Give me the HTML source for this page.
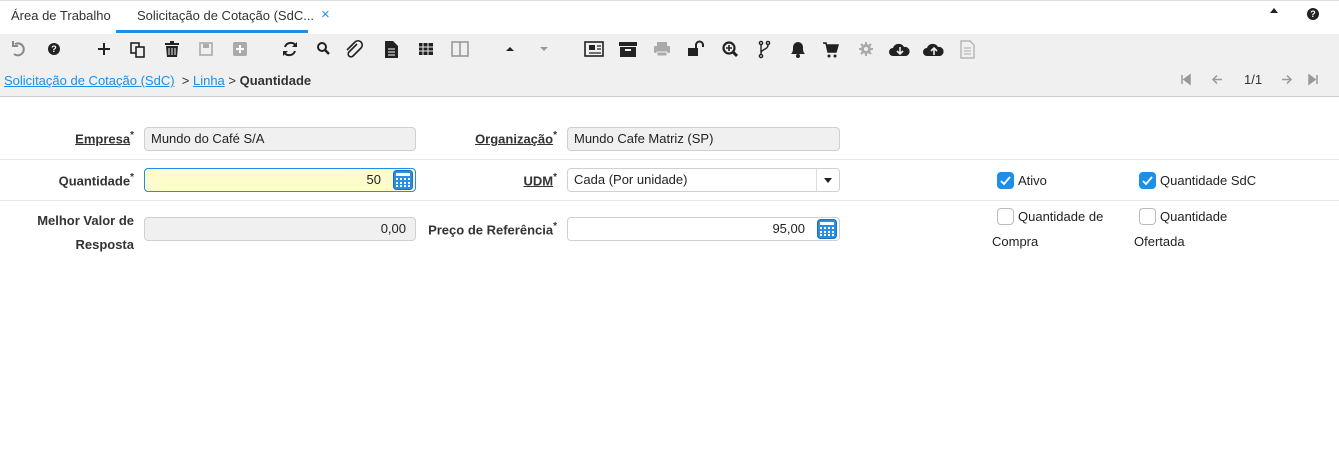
<!DOCTYPE html>
<html><head><meta charset="utf-8"><style>
*{box-sizing:border-box;margin:0;padding:0}
body{width:1339px;height:464px;background:#fff;font-family:"Liberation Sans",sans-serif;font-size:13px;color:#333;position:relative;overflow:hidden}
.abs{position:absolute}
.tabbar{left:0;top:0;width:1339px;height:34px;background:#fff;border-top:1px solid #ddd}
.toolbar{left:0;top:34px;width:1339px;height:63px;background:#f0f0f0;border-bottom:1px solid #ccc}
.lbl{position:absolute;font-weight:bold;font-size:13px;text-align:right;color:#333}
.lbl sup{font-size:10px}
.inp{position:absolute;height:24px;border:1px solid #d0d0d0;border-radius:4px;background:#f0f0f0;font-size:13px;padding:0 6px;line-height:22px;color:#222}
.sep{position:absolute;left:0;width:1339px;height:1px;background:#e8e8e8}
.cb{position:absolute;width:17px;height:17px;border-radius:4px;border:1px solid #bbb;background:#fff}
.cb.on{background:#1e8fe8;border-color:#1e8fe8}
.ct{position:absolute;font-size:13px;color:#222}
</style></head><body>
<div class="abs tabbar"></div>
<div class="abs" style="left:11px;top:8px;font-size:13px;color:#333">Área de Trabalho</div>
<div class="abs" style="left:137px;top:8px;font-size:13px;color:#333">Solicitação de Cotação (SdC...</div>
<div class="abs" style="left:321px;top:6px;font-size:15px;color:#1e8fe8">×</div>
<div class="abs" style="left:116px;top:30px;width:192px;height:3px;background:#1e8fe8"></div>
<div class="abs" style="left:1270px;top:8px;width:0;height:0;border-left:4px solid transparent;border-right:4px solid transparent;border-bottom:5px solid #222"></div>
<div class="abs" style="left:1307px;top:8px;width:12px;height:12px;border-radius:50%;background:#222;color:#fff;font-size:9px;font-weight:bold;text-align:center;line-height:12px">?</div>
<div class="abs toolbar"></div>

<svg class="abs" style="left:0;top:34px" width="990" height="32" viewBox="0 34 990 32">
<g fill="none" stroke="#888" stroke-width="2"><path d="M15 44 A6 6 0 1 1 14 54"/><path d="M13 41v5h5" /></g>
<circle cx="54" cy="49" r="6" fill="#222"/><text x="54" y="52" font-size="9" font-weight="bold" fill="#fff" text-anchor="middle" font-family="Liberation Sans">?</text>
<path d="M104 43v12M98 49h12" stroke="#222" stroke-width="2"/>
<g fill="none" stroke="#222" stroke-width="1.6"><rect x="131" y="43" width="8" height="10"/><rect x="136" y="47" width="8" height="10" fill="#f0f0f0"/></g>
<g fill="#222"><rect x="165" y="43" width="14" height="2"/><rect x="170" y="41" width="4" height="2"/><path d="M166 46h12l-1 11h-10z"/></g>
<path d="M169 48v7M172 48v7M175 48v7" stroke="#f0f0f0" stroke-width="1"/>
<rect x="200" y="43" width="12" height="12" fill="none" stroke="#aaa" stroke-width="1.6"/><rect x="203" y="44" width="6" height="4" fill="#aaa"/>
<rect x="233" y="42" width="14" height="14" rx="2" fill="#aaa"/><path d="M240 45v8M236 49h8" stroke="#fff" stroke-width="2"/>
<g fill="none" stroke="#222" stroke-width="2"><path d="M296 46a6 6 0 0 0-11 1"/><path d="M284 52a6 6 0 0 0 11-1"/></g><path d="M297 42v5h-5z M283 56v-5h5z" fill="#222"/>
<circle cx="322" cy="47" r="4" fill="none" stroke="#222" stroke-width="2"/><path d="M325 50l4 4" stroke="#222" stroke-width="2.5"/>
<path d="M361 45l-8 8a2.5 2.5 0 0 0 4 4l8-8a4 4 0 0 0-6-6l-8 8" fill="none" stroke="#222" stroke-width="1.6" transform="translate(-4,-1)"/>
<path d="M385 41h8l5 5v12h-13z" fill="#222"/><path d="M388 49h7M388 52h7M388 55h7" stroke="#fff" stroke-width="1"/>
<rect x="419" y="43" width="14" height="12" fill="#222"/><path d="M419 47h14M419 51h14M423 43v12M428 43v12" stroke="#f0f0f0" stroke-width="1"/>
<rect x="452" y="42" width="16" height="14" fill="none" stroke="#999" stroke-width="1.6"/><path d="M460 42v14" stroke="#999" stroke-width="1.6"/>
<path d="M506 51l4-4 4 4z" fill="#222"/><path d="M540 47l4 4 4-4z" fill="#999"/>
<rect x="585" y="42" width="18" height="14" fill="none" stroke="#222" stroke-width="1.6"/><rect x="589" y="45" width="6" height="5" fill="#222"/><path d="M597 46h4M597 49h4M589 53h12" stroke="#222" stroke-width="1.2"/>
<rect x="619" y="42" width="18" height="4" fill="#222"/><rect x="620" y="47" width="16" height="10" fill="#222"/><rect x="625" y="49" width="6" height="2" fill="#f0f0f0"/>
<rect x="657" y="42" width="10" height="4" fill="#aaa"/><rect x="654" y="46" width="16" height="7" rx="1" fill="#aaa"/><rect x="657" y="52" width="10" height="4" fill="#aaa" stroke="#f0f0f0"/>
<rect x="688" y="48" width="10" height="8" fill="#222"/><path d="M696 48v-3a3.5 3.5 0 0 1 7 0v2" fill="none" stroke="#222" stroke-width="2"/>
<circle cx="729" cy="48" r="5.5" fill="none" stroke="#222" stroke-width="2.2"/><path d="M733 52l4 4" stroke="#222" stroke-width="3"/><path d="M729 45v6M726 48h6" stroke="#222" stroke-width="1.6"/>
<g fill="none" stroke="#222" stroke-width="1.4"><circle cx="761" cy="43" r="1.6"/><circle cx="768" cy="43" r="1.6"/><circle cx="761" cy="56" r="1.6"/><path d="M761 45v9M768 45c0 5-7 4-7 8"/></g>
<path d="M791 54c2-2 2-4 2-7a5 5 0 0 1 10 0c0 3 0 5 2 7z" fill="#222"/><circle cx="798" cy="56" r="2" fill="#222"/>
<path d="M823 43h3l2 9h8l2-7h-11" fill="#222" stroke="#222" stroke-width="1.5"/><circle cx="829" cy="56" r="1.5" fill="#222"/><circle cx="835" cy="56" r="1.5" fill="#222"/>
<circle cx="866" cy="49" r="5" fill="#aaa"/><circle cx="866" cy="49" r="2" fill="#f0f0f0"/><path d="M866 42v3M866 53v3M859 49h3M870 49h3M861 44l2 2M869 52l2 2M871 44l-2 2M861 54l2-2" stroke="#aaa" stroke-width="2"/>
<path d="M893 56a4 4 0 0 1 0-8 6 6 0 0 1 11-1 4.5 4.5 0 0 1 2 9z" fill="#222"/><path d="M900 47v6M897 51l3 3 3-3" stroke="#f0f0f0" stroke-width="1.6" fill="none"/>
<path d="M927 56a4 4 0 0 1 0-8 6 6 0 0 1 11-1 4.5 4.5 0 0 1 2 9z" fill="#222"/><path d="M934 55v-6M931 51l3-3 3 3" stroke="#f0f0f0" stroke-width="1.6" fill="none"/>
<path d="M961 41h9l4 4v13h-13z" fill="none" stroke="#aaa" stroke-width="1.2"/><path d="M964 48h7M964 51h7M964 54h7" stroke="#aaa"/>
</svg>

<div class="abs" style="left:4px;top:73px;font-size:13px"><span style="color:#1e8fe8;text-decoration:underline">Solicitação de Cotação (SdC)</span>&nbsp; &gt; <span style="color:#1e8fe8;text-decoration:underline">Linha</span> &gt; <b>Quantidade</b></div>
<svg class="abs" style="left:1175px;top:72px" width="150" height="16">
<path d="M7 3v9M15 3l-6 4.5 6 4.5z" stroke="#999" fill="#999" stroke-width="1.5"/>
<path d="M47 7.5h-9M42 3.5l-4 4 4 4" stroke="#999" fill="none" stroke-width="1.5"/>
<path d="M107 7.5h9M112 3.5l4 4-4 4" stroke="#999" fill="none" stroke-width="1.5"/>
<path d="M142 3v9M134 3l6 4.5-6 4.5z" stroke="#999" fill="#999" stroke-width="1.5"/>
</svg>
<div class="abs" style="left:1244px;top:72px;font-size:13px;color:#333">1/1</div>

<div class="lbl" style="right:1205px;top:130px"><u>Empresa</u><sup>*</sup></div>
<div class="inp" style="left:144px;top:127px;width:272px">Mundo do Café S/A</div>
<div class="lbl" style="right:782px;top:130px"><u>Organização</u><sup>*</sup></div>
<div class="inp" style="left:567px;top:127px;width:273px">Mundo Cafe Matriz (SP)</div>
<div class="sep" style="top:159px"></div>

<div class="lbl" style="right:1205px;top:172px">Quantidade<sup>*</sup></div>
<div class="inp" style="left:144px;top:168px;width:272px;background:#fefccc;border-color:#1e8fe8;text-align:right;padding-right:34px">50</div>
<svg class="abs" style="left:393px;top:170px" width="20" height="20"><rect x="0.5" y="0.5" width="19" height="19" rx="3" fill="#2a8fe0" stroke="#1a6fc0"/><rect x="3" y="3" width="14" height="3" fill="#fff"/><g fill="#fff"><rect x="3" y="8" width="2" height="2"/><rect x="7" y="8" width="2" height="2"/><rect x="11" y="8" width="2" height="2"/><rect x="15" y="8" width="2" height="2"/><rect x="3" y="12" width="2" height="2"/><rect x="7" y="12" width="2" height="2"/><rect x="11" y="12" width="2" height="2"/><rect x="15" y="12" width="2" height="2"/><rect x="3" y="15" width="2" height="2"/><rect x="7" y="15" width="2" height="2"/><rect x="11" y="15" width="2" height="2"/><rect x="15" y="15" width="2" height="2"/></g></svg>
<div class="lbl" style="right:782px;top:172px"><u>UDM</u><sup>*</sup></div>
<div class="inp" style="left:567px;top:168px;width:273px;background:#fff">Cada (Por unidade)</div>
<div class="abs" style="left:816px;top:169px;width:1px;height:22px;background:#ddd"></div>
<div class="abs" style="left:824px;top:178px;width:0;height:0;border-left:4px solid transparent;border-right:4px solid transparent;border-top:5px solid #222"></div>
<div class="cb on" style="left:997px;top:172px"></div>
<div class="ct" style="left:1018px;top:173px">Ativo</div>
<div class="cb on" style="left:1139px;top:172px"></div>
<div class="ct" style="left:1160px;top:173px">Quantidade SdC</div>
<svg class="abs" style="left:997px;top:172px" width="160" height="17"><path d="M4 9l3 3 6-7" stroke="#fff" stroke-width="1.8" fill="none"/><path d="M146 9l3 3 6-7" stroke="#fff" stroke-width="1.8" fill="none"/></svg>
<div class="sep" style="top:200px"></div>

<div class="lbl" style="right:1205px;top:209px;line-height:24px">Melhor Valor de<br>Resposta</div>
<div class="inp" style="left:144px;top:217px;width:272px;text-align:right;padding-right:9px">0,00</div>
<div class="lbl" style="right:782px;top:221px">Preço de Referência<sup>*</sup></div>
<div class="inp" style="left:567px;top:217px;width:273px;background:#fff;text-align:right;padding-right:34px">95,00</div>
<svg class="abs" style="left:817px;top:219px" width="20" height="20"><rect x="0.5" y="0.5" width="19" height="19" rx="3" fill="#2a8fe0" stroke="#1a6fc0"/><rect x="3" y="3" width="14" height="3" fill="#fff"/><g fill="#fff"><rect x="3" y="8" width="2" height="2"/><rect x="7" y="8" width="2" height="2"/><rect x="11" y="8" width="2" height="2"/><rect x="15" y="8" width="2" height="2"/><rect x="3" y="12" width="2" height="2"/><rect x="7" y="12" width="2" height="2"/><rect x="11" y="12" width="2" height="2"/><rect x="15" y="12" width="2" height="2"/><rect x="3" y="15" width="2" height="2"/><rect x="7" y="15" width="2" height="2"/><rect x="11" y="15" width="2" height="2"/><rect x="15" y="15" width="2" height="2"/></g></svg>
<div class="cb" style="left:997px;top:208px"></div>
<div class="ct" style="left:1018px;top:209px">Quantidade de</div>
<div class="ct" style="left:992px;top:234px">Compra</div>
<div class="cb" style="left:1139px;top:208px"></div>
<div class="ct" style="left:1160px;top:209px">Quantidade</div>
<div class="ct" style="left:1134px;top:234px">Ofertada</div>
</body></html>
